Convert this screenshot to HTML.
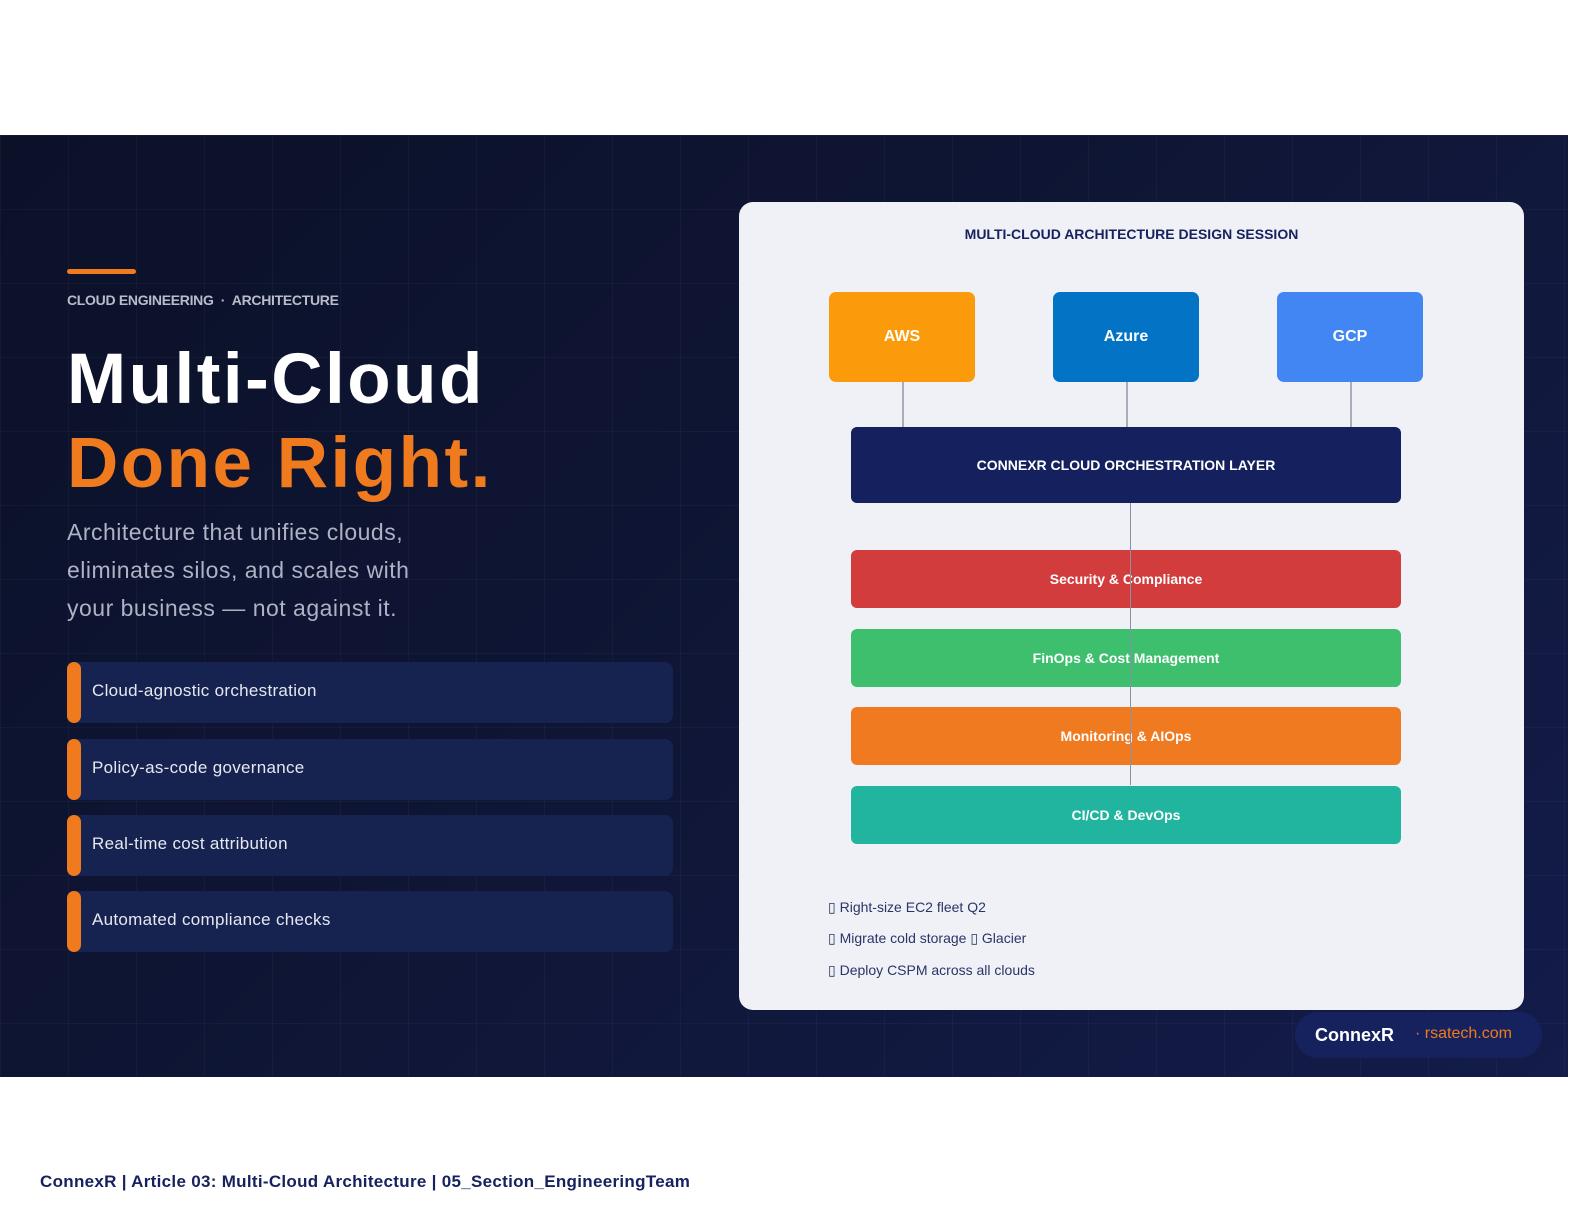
<!DOCTYPE html>
<html><head><meta charset="utf-8"><style>
*{margin:0;padding:0;box-sizing:border-box}
body{width:1584px;height:1224px;background:#fff;position:relative;font-family:"Liberation Sans",sans-serif;overflow:hidden}
.hero{position:absolute;left:0;top:135px;width:1568px;height:942px;background:linear-gradient(135deg,#0b1128 0%,#0f1636 50%,#131c4a 100%);overflow:hidden}
.grid{position:absolute;inset:0;background-image:linear-gradient(rgba(255,255,255,0.03) 1px,transparent 1px),linear-gradient(90deg,rgba(255,255,255,0.03) 1px,transparent 1px);background-size:68px 74px}
.a{position:absolute}
.acc{left:67px;top:134px;width:69px;height:5px;border-radius:3px;background:#f07a1e}
.kick{left:67px;top:157px;color:#b9bccb;font-size:14px;font-weight:bold;letter-spacing:-0.3px}
.h1{left:67px;top:203px;color:#fff;font-size:71px;font-weight:bold;letter-spacing:2.5px;line-height:84px}
.h1 span{color:#f07a1e}
.sub{left:67px;top:378px;color:#aeb2c4;font-size:23px;line-height:38px;width:370px;letter-spacing:0.5px}
.li{left:67px;width:606px;height:61px;background:#162350;border-radius:8px;color:#e6e8f0;font-size:17px;padding:19px 0 0 25px;letter-spacing:0.3px}
.li:before{content:"";position:absolute;left:0;top:0;width:14px;height:100%;background:#f07a1e;border-radius:7px}
.card{left:739px;top:67px;width:785px;height:808px;background:#f0f1f7;border-radius:14px}
.ct{position:absolute;left:0;width:785px;top:24px;text-align:center;font-size:14px;font-weight:bold;color:#16215e}
.cl{position:absolute;width:146px;height:90px;border-radius:7px;color:#fff;font-weight:bold;font-size:16px;text-align:center;line-height:90px;top:90px}
.vl{position:absolute;width:2px;background:#a8adbd}
.bar{position:absolute;left:112px;width:550px;border-radius:6px;color:#fff;font-weight:bold;font-size:14px;text-align:center}
.note{position:absolute;left:89px;font-size:14px;color:#2a3566}
.badge{left:1295px;top:877px;width:247px;height:46px;border-radius:23px;background:#15225e}
.foot{position:absolute;left:40px;top:1172px;font-size:17px;font-weight:bold;color:#16215e;letter-spacing:0.3px}
</style></head><body>
<div class="hero"><div class="grid"></div>
<div class="a acc"></div>
<div class="a kick">CLOUD ENGINEERING &nbsp;·&nbsp; ARCHITECTURE</div>
<div class="a h1">Multi-Cloud<br><span>Done Right.</span></div>
<div class="a sub">Architecture that unifies clouds, eliminates silos, and scales with your business — not against it.</div>
<div class="a li" style="top:527px">Cloud-agnostic orchestration</div>
<div class="a li" style="top:604px">Policy-as-code governance</div>
<div class="a li" style="top:680px">Real-time cost attribution</div>
<div class="a li" style="top:756px">Automated compliance checks</div>
<div class="a card">
<div class="ct">MULTI-CLOUD ARCHITECTURE DESIGN SESSION</div>
<div class="vl" style="left:163px;top:180px;height:45px"></div>
<div class="vl" style="left:387px;top:180px;height:45px"></div>
<div class="vl" style="left:611px;top:180px;height:45px"></div>
<div class="cl" style="left:90px;background:#fb9a0a">AWS</div>
<div class="cl" style="left:314px;background:#0373c6">Azure</div>
<div class="cl" style="left:538px;background:#4286f4">GCP</div>
<div class="bar" style="top:225px;height:76px;line-height:76px;background:#14215e">CONNEXR CLOUD ORCHESTRATION LAYER</div>
<div class="bar" style="top:348px;height:58px;line-height:58px;background:#d33c3c">Security &amp; Compliance</div>
<div class="bar" style="top:427px;height:58px;line-height:58px;background:#3dbf6e">FinOps &amp; Cost Management</div>
<div class="bar" style="top:505px;height:58px;line-height:58px;background:#f07a20">Monitoring &amp; AIOps</div>
<div class="bar" style="top:584px;height:58px;line-height:58px;background:#21b59f">CI/CD &amp; DevOps</div>
<div class="vl" style="left:391px;top:301px;height:282px;width:1px;background:#8a90a8"></div>
<div class="note" style="top:697px">▯ Right-size EC2 fleet Q2</div>
<div class="note" style="top:728px">▯ Migrate cold storage ▯ Glacier</div>
<div class="note" style="top:760px">▯ Deploy CSPM across all clouds</div>
</div>
<div class="a badge"><span style="position:absolute;left:20px;top:13px;color:#fff;font-weight:bold;font-size:18px">ConnexR</span><span style="position:absolute;left:120px;top:13px;color:#f07a1e;font-size:16px">· rsatech.com</span></div>
</div>
<div class="foot">ConnexR | Article 03: Multi-Cloud Architecture | 05_Section_EngineeringTeam</div>
</body></html>
